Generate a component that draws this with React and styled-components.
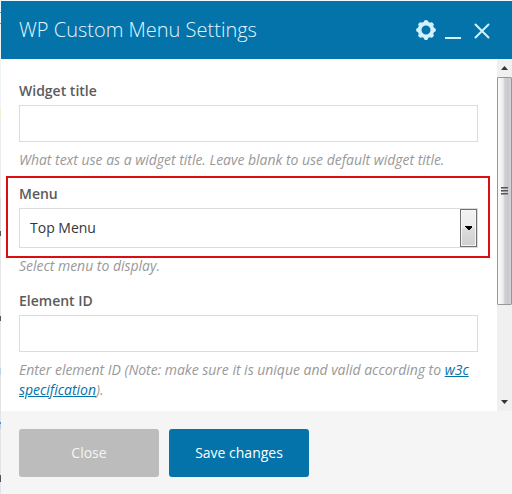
import React from "react";
import styled, { createGlobalStyle } from "styled-components";

const GlobalStyle = createGlobalStyle`
  * { box-sizing: border-box; }
  body {
    margin: 0;
    overflow: hidden;
    background: linear-gradient(
      #eef8fb 0 12px, #4d9fc4 12px 13px, #eef8fb 13px 23px, #4d9fc4 23px 24px,
      #eef3f5 24px 108px, #f3eed6 108px 121px, #ececee 121px 198px,
      #dcdce8 198px 231px, #555 231px 236px, #e6e6ea 236px 316px,
      #555 316px 321px, #e6e6ea 321px 368px, #b9d2e6 368px 375px,
      #e3e3e6 375px 422px, #5b8db0 422px 424px, #b9d2e6 424px 429px,
      #e3e3e6 429px 475px, #555 475px 482px, #dfe5ea 482px
    );
    font-family: "Open Sans", "Noto Sans", sans-serif;
  }
`;

const Dialog = styled.section`
  display: flex;
  flex-direction: column;
  width: 511px;
  height: 493px;
  margin-left: 1px;
  background: #fff;
`;

const Page = styled.main`
  display: flex;
  padding-top: 1px;
  height: 494px;
`;

const Header = styled.header`
  display: flex;
  align-items: center;
  justify-content: space-between;
  height: 58px;
  padding: 0 22px 0 18px;
  background: #0473aa;
  color: #d3f1fd;
`;

const Title = styled.h1`
  margin: 0;
  font-size: 20px;
  line-height: 28px;
  font-weight: 300;
  color: #e2f6ff;
  white-space: nowrap;
`;

const Controls = styled.div`
  display: flex;
  align-items: center;
  gap: 9px;
`;

const Control = styled.button`
  display: flex;
  padding: 0;
  border: 0;
  background: none;
  color: inherit;
`;

const Content = styled.div`
  display: flex;
  height: 352px;
`;

const Form = styled.form`
  width: 496px;
  padding: 22px 19px 0 18px;
`;

const Field = styled.div`
  display: flex;
  flex-direction: column;
  position: relative;
  margin-bottom: ${(p) => p.$gap || 0}px;
`;

const Highlight = styled.div`
  position: absolute;
  left: -13px;
  top: -8px;
  width: 484px;
  height: 82px;
  border: 2px solid #dc0d10;
  pointer-events: none;
`;

const Label = styled.label`
  height: 20px;
  margin-bottom: 4px;
  font-size: 14px;
  line-height: 20px;
  font-weight: 600;
  color: #5b5b5b;
`;

const Input = styled.input`
  width: 459px;
  height: 37px;
  padding: 0 10px;
  border: 1px solid #dcdcdc;
  background: #fff;
  outline: 0;
`;

const Select = styled.div`
  display: flex;
  align-items: center;
  justify-content: space-between;
  width: 459px;
  height: 40px;
  padding-left: 10px;
  border: 1px solid #dcdcdc;
  color: #32373c;
  font-size: 14px;
`;

const SelectValue = styled.span`
  padding-bottom: 2px;
`;

const SelectArrow = styled.span`
  display: flex;
  align-items: center;
  justify-content: center;
  width: 17px;
  height: 38px;
  border: 1px solid #707070;
  box-shadow: inset 0 0 0 1px #f7f7f7;
  background: linear-gradient(#f2f2f2 0%, #ebebeb 50%, #dddddd 51%, #cfcfcf 100%);
`;

const Hint = styled.p`
  margin: 8px 0 0;
  font-size: 14px;
  line-height: 20px;
  font-style: italic;
  letter-spacing: -0.02px;
  color: #999;
  white-space: nowrap;
`;

const Link = styled.a`
  color: #0473aa;
  text-decoration: underline;
`;

const Scrollbar = styled.div`
  display: flex;
  flex-direction: column;
  width: 15px;
  background: #f0f0f0;
`;

const ScrollArrow = styled.div`
  display: flex;
  align-items: center;
  justify-content: center;
  height: 18px;
`;

const Thumb = styled.div`
  display: flex;
  align-items: center;
  justify-content: center;
  height: 228px;
  border: 1px solid #979797;
  border-radius: 1px;
  background: linear-gradient(90deg, #fafafa 0, #eeeeef 38%, #d3d3d7 50%, #c8c8cd 75%, #d4d4d8 100%);
`;

const ScrollSpace = styled.div`
  flex: 1;
`;

const Footer = styled.footer`
  display: flex;
  gap: 10px;
  height: 83px;
  padding: 18px;
  background: #f5f5f5;
`;

const Button = styled.button`
  width: 140px;
  height: 48px;
  padding: 0 0 1px;
  border: 0;
  border-radius: 3px;
  background: ${(p) => (p.$primary ? "#0473aa" : "#bcbcbc")};
  color: ${(p) => (p.$primary ? "#fff" : "#f5f5f5")};
  font: 14px "Open Sans", sans-serif;
`;

const teeth = [0, 45, 90, 135, 180, 225, 270, 315];

export default function App() {
  return (
    <>
      <GlobalStyle />
      <Page>
        <Dialog>
          <Header>
            <Title>WP Custom Menu Settings</Title>
            <Controls>
              <Control type="button" aria-label="Settings">
                <svg width="20" height="20" viewBox="-10 -10 20 20">
                  <circle r="6.4" fill="none" stroke="currentColor" strokeWidth="3.8" />
                  {teeth.map((a) => (
                    <path key={a} d="M-2.6 -7.5 L-1.6 -9.4 Q0 -10.4 1.6 -9.4 L2.6 -7.5 Z" fill="currentColor" transform={`rotate(${a})`} />
                  ))}
                </svg>
              </Control>
              <Control type="button" aria-label="Minimize">
                <svg width="16" height="20" viewBox="0 0 16 20">
                  <path d="M0 18H16" stroke="currentColor" strokeWidth="2" />
                </svg>
              </Control>
              <Control type="button" aria-label="Close dialog">
                <svg width="20" height="20" viewBox="0 0 20 20">
                  <path d="M5.5 4.5 18.5 17.5M18.5 4.5 5.5 17.5" stroke="currentColor" strokeWidth="2" strokeLinecap="round" />
                </svg>
              </Control>
            </Controls>
          </Header>
          <Content>
            <Form>
              <Field $gap={14}>
                <Label>Widget title</Label>
                <Input aria-label="Widget title" />
                <Hint>What text use as a widget title. Leave blank to use default widget title.</Hint>
              </Field>
              <Field $gap={15}>
                <Label>Menu</Label>
                <Select>
                  <SelectValue>Top Menu</SelectValue>
                  <SelectArrow>
                    <svg width="7" height="4" viewBox="0 0 7 4" shapeRendering="crispEdges">
                      <path d="M0 0H7V1L4 4H3L0 1Z" fill="#000" />
                    </svg>
                  </SelectArrow>
                </Select>
                <Hint>Select menu to display.</Hint>
                <Highlight />
              </Field>
              <Field>
                <Label>Element ID</Label>
                <Input aria-label="Element ID" />
                <Hint>
                  Enter element ID (Note: make sure it is unique and valid according to <Link>w3c</Link>
                  <br />
                  <Link>specification</Link>).
                </Hint>
              </Field>
            </Form>
            <Scrollbar>
              <ScrollArrow>
                <svg width="7" height="4" viewBox="0 0 7 4">
                  <path d="M0 4 3.5 0 7 4Z" fill="#333" />
                </svg>
              </ScrollArrow>
              <Thumb>
                <svg width="7" height="8" viewBox="0 0 7 8" shapeRendering="crispEdges">
                  <path d="M0 .5H7M0 3.5H7M0 6.5H7" stroke="#555" />
                  <path d="M0 1.5H7M0 4.5H7M0 7.5H7" stroke="#999" />
                </svg>
              </Thumb>
              <ScrollSpace />
              <ScrollArrow>
                <svg width="7" height="4" viewBox="0 0 7 4">
                  <path d="M0 0H7L3.5 4Z" fill="#333" />
                </svg>
              </ScrollArrow>
            </Scrollbar>
          </Content>
          <Footer>
            <Button type="button">Close</Button>
            <Button type="button" $primary>Save changes</Button>
          </Footer>
        </Dialog>
      </Page>
    </>
  );
}
